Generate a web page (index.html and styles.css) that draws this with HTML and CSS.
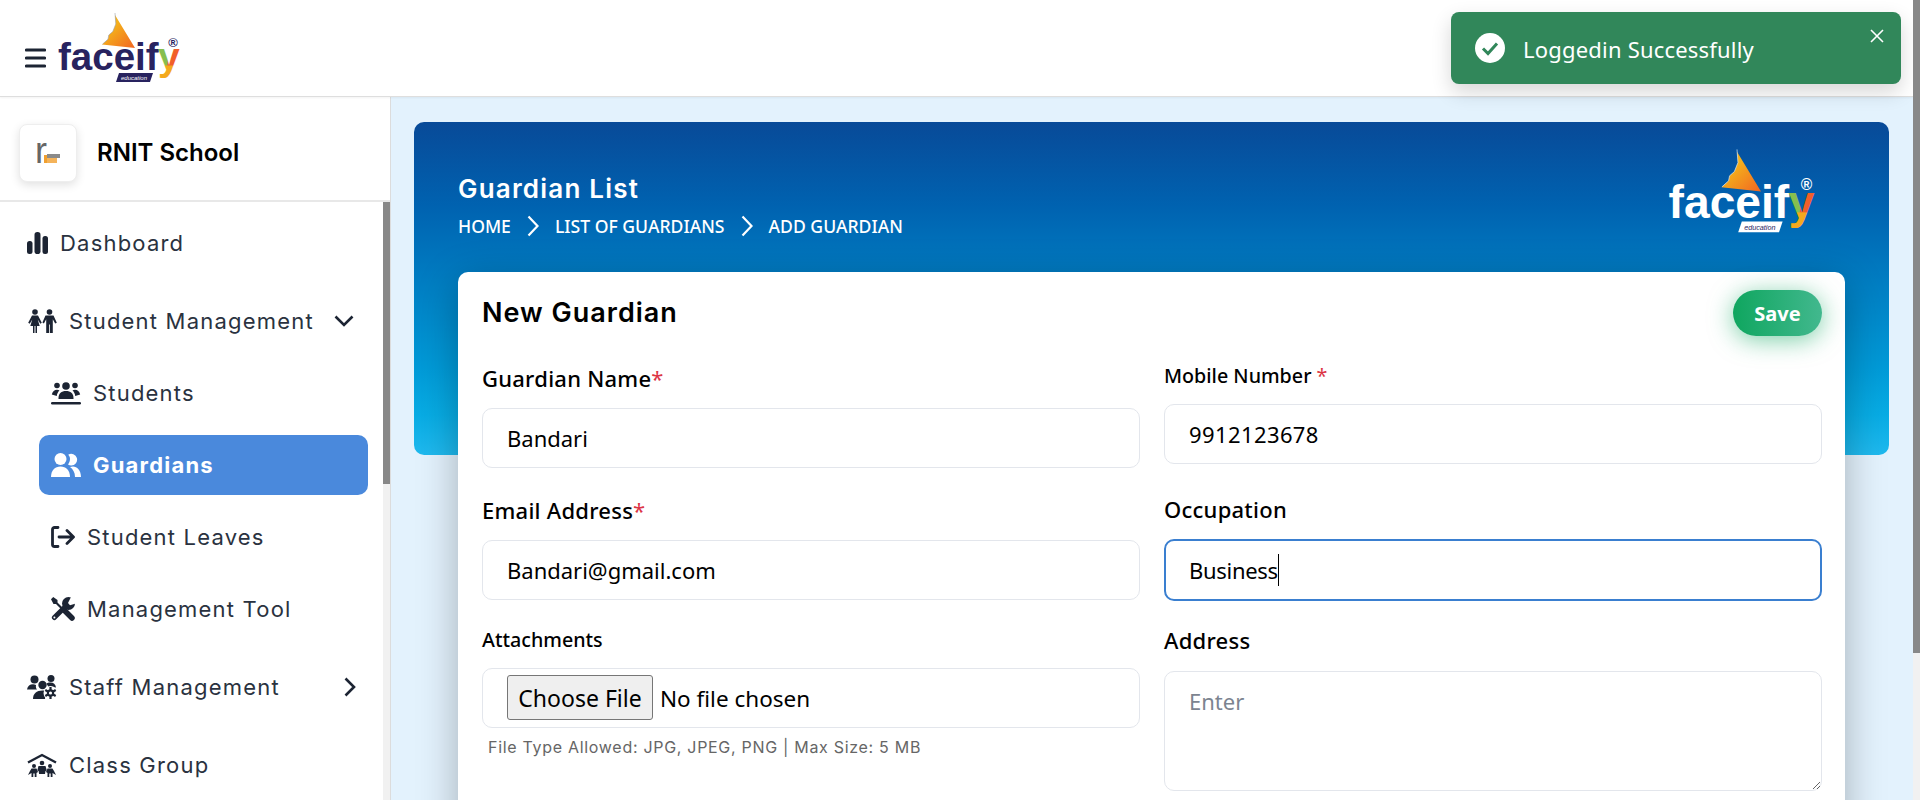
FILE: index.html
```html
<!DOCTYPE html>
<html lang="en">
<head>
<meta charset="utf-8">
<title>Guardian List</title>
<link rel="stylesheet" href="styles.css">
</head>
<body>
<svg class="defs" width="0" height="0" aria-hidden="true">
  <defs>
    <linearGradient id="kite" x1="0" y1="0" x2="1" y2="1">
      <stop offset="0.35" stop-color="#f4b01b"/>
      <stop offset="1" stop-color="#f26522"/>
    </linearGradient>
    <pattern id="wye" patternUnits="userSpaceOnUse" x="0" y="0" width="125" height="75">
      <rect width="125" height="75" fill="#86bf4f"/>
      <polygon points="115,30 125,30 125,75 110,75" fill="#f15f2a"/>
      <rect y="54.500" width="125" height="21" fill="#f4a91d"/>
    </pattern>
  </defs>
</svg>
<div class="app">
  <header class="topbar">
    <button class="burger" aria-label="Menu">
      <svg width="21" height="20" viewBox="0 0 21 20"><path d="M1.500 2h18M1.500 10h18M1.500 18h18"/></svg>
    </button>
    <svg class="logo logo-dark" width="125" height="75" viewBox="0 0 125 75">
      <path class="kite" d="M60 4l.8 9-3 7.500-4 3.500-.8 4.200L47 33.500l33 3.500z"/>
      <path class="kite-edge" d="M60 2l.8 11-3 7.500-4 3.500-.8 4.200-5.500 5"/>
      <text class="logo-word" x="3" y="59">faceif</text>
      <text class="logo-y" x="103" y="59">y</text>
      <text class="logo-reg" x="118" y="36">®</text>
      <path class="logo-tag-bg" d="M64 62h34l-3 9H61z"/>
      <text class="logo-tag" x="79" y="69">education</text>
    </svg>
    <div class="toast">
      <svg class="toast-check" width="30" height="30" viewBox="0 0 30 30"><circle cx="15" cy="15" r="15"/><path d="M8 15.500l5 5 9-10"/></svg>
      <span class="toast-text">Loggedin Successfully</span>
      <svg class="toast-close" width="14" height="14" viewBox="0 0 14 14"><path d="M1 1l12 12M13 1L1 13"/></svg>
    </div>
  </header>
  <div class="shell">
    <aside class="sidebar">
      <div class="school">
        <div class="school-logo">
          <svg width="26" height="46" viewBox="0 0 26 46">
            <text class="school-r" x="0" y="33">r</text>
            <rect x="9" y="25" width="3" height="8" fill="#f0a030"/>
            <rect x="12" y="24" width="13" height="4" fill="#8a8a8a"/>
            <rect x="12" y="28" width="10" height="5" fill="#f4b35a"/>
          </svg>
        </div>
        <span class="school-name">RNIT School</span>
      </div>
      <div class="side-body">
        <nav class="menu">
          <a class="item">
            <svg width="21" height="22" viewBox="0 0 21 22"><rect x="0" y="9" width="5.500" height="13" rx="2.500"/><rect x="7.500" y="0" width="6" height="22" rx="2.800"/><rect x="15.500" y="4" width="5.500" height="18" rx="2.500"/></svg>
            <span>Dashboard</span>
          </a>
          <div class="group">
            <a class="item">
              <svg width="30" height="24" viewBox="0 0 30 24"><circle cx="8" cy="3" r="2.800"/><path d="M5 6.500h6l3.800 7.300-1.500.9-2.600-4.200 2 6.500H10v7H8.500v-7h-1v7H6v-7H3.300l2-6.500-2.600 4.200-1.500-.9z"/><circle cx="22.500" cy="3" r="2.800"/><path d="M18.500 6.500h8l3.300 7.300-1.600.8-2.400-4.300V24h-2.900v-8.500h-.8V24h-2.900V10.300l-2.300 4.300-1.500-1z"/></svg>
              <span>Student Management</span>
              <svg class="chev chev-down" width="20" height="12" viewBox="0 0 20 12"><path d="M1.500 1.500l8.500 8.500 8.500-8.500"/></svg>
            </a>
            <div class="sub">
              <a class="item sub-item">
                <svg width="30" height="23" viewBox="0 0 30 23"><circle cx="15" cy="4" r="3.800"/><circle cx="6" cy="3.500" r="2.800"/><circle cx="24" cy="3.500" r="2.800"/><path d="M7.500 16c0-4.500 3-7 7.500-7s7.500 2.500 7.500 7v1h-15z"/><path d="M.8 12.500C1.500 9.500 3.500 7.800 6 7.800c1 0 1.800.2 2.500.6C7 9.800 6 11.500 5.800 14z"/><path d="M29.200 12.500c-.7-3-2.700-4.700-5.200-4.700-1 0-1.800.2-2.500.6 1.500 1.400 2.500 3.100 2.700 5.600z"/><rect y="20" width="30" height="2.500" rx="1.200"/></svg>
                <span>Students</span>
              </a>
              <a class="item sub-item active">
                <svg width="30" height="24" viewBox="0 0 30 24"><circle cx="9.500" cy="6" r="6"/><path d="M0 24c0-6.500 4-10.500 9.500-10.500S19 17.500 19 24z"/><path d="M17 11.500c1 .6 2 1 3.300 1a5.800 5.800 0 1 0-3.100-10.700C18.500 3 19 4.500 19 6c0 2-.8 4.200-2 5.500z"/><path d="M19 14c3 2.200 5 5.500 5 10h6c0-6.500-4-10.500-8-10.500-1 0-2 .2-3 .5z"/></svg>
                <span>Guardians</span>
              </a>
              <a class="item sub-item">
                <svg class="stroke-icon" width="24" height="22" viewBox="0 0 24 22"><path d="M7 1.500H3.500a2 2 0 0 0-2 2v15a2 2 0 0 0 2 2H7"/><path d="M8 11h14M16 4.500l6.500 6.500-6.500 6.500"/></svg>
                <span>Student Leaves</span>
              </a>
              <a class="item sub-item">
                <svg width="24" height="24" viewBox="0 0 24 24"><path d="M0 2.200L2.200 0l4.300 3v2.500l5.500 5.500-1.500 1.500-5.500-5.500H2.500z"/><path class="line thick" d="M13.500 13.500l7.500 7.500"/><path class="line mid" d="M3.400 20.600L13 11"/><circle cx="17.500" cy="6.500" r="6.500"/><polygon class="notch" points="17,6 20.500,-1 25,-1 25,5 24.500,6.500 19,8.200"/><circle class="notch" cx="3.400" cy="20.600" r="1"/></svg>
                <span>Management Tool</span>
              </a>
            </div>
          </div>
          <a class="item">
            <svg width="30" height="24" viewBox="0 0 30 24"><circle cx="7.500" cy="4.500" r="4"/><circle cx="24" cy="3.500" r="3.500"/><circle cx="15.500" cy="10" r="4.200"/><path d="M0 14.500C.5 11 3 9.300 6 9.300c1 0 2 .2 3 .7-.4 2 .2 3.500 1 4.500z"/><path d="M6 24c0-5.500 3.500-8.500 9.500-8.500 1.500 0 2.800.2 3.500.6L18 24z"/><path d="M19.500 9c.2-1 1.500-1.500 4-1.500 3 0 5 1.800 5.500 5h-7.500c-.6-1.500-1-2.500-2-3.500z"/><circle class="notch" cx="23.500" cy="18" r="7"/><circle cx="23.500" cy="18" r="3.700"/><path class="gear-teeth" d="M23.500 12v12M18.300 15l10.400 6M18.300 21l10.400-6"/><circle class="notch" cx="23.500" cy="18" r="1.600"/></svg>
            <span>Staff Management</span>
            <svg class="chev chev-right" width="12" height="20" viewBox="0 0 12 20"><path d="M1.500 1.500l8.500 8.500-8.500 8.500"/></svg>
          </a>
          <a class="item">
            <svg width="30" height="24" viewBox="0 0 30 24"><path class="roof" d="M1 9.500L15 2l14 7.500"/><circle cx="15" cy="10" r="2.300"/><circle cx="7" cy="13" r="2"/><circle cx="23" cy="13" r="2"/><path d="M11.500 13h7l1.300 4.500-1.300.5-.5 3h-5.900l-.5-3-1.300-.5z"/><path d="M4.500 15.500h5L11 19l-1.500 1V24h-1.800v-3.500h-1.400V24H4.500v-4L1 22l2-4z"/><path d="M20.500 15.500h5l1.500 2.500 2 4-3.500-2V24h-1.800v-3.500h-1.400V24H20.500v-4L19 19z"/></svg>
            <span>Class Group</span>
          </a>
        </nav>
        <div class="scrollbar side-scroll"><div class="thumb"></div></div>
      </div>
    </aside>
    <main class="content">
      <section class="hero">
        <div class="hero-head">
          <div>
            <h1 class="hero-title">Guardian List</h1>
            <div class="crumbs">
              <span>HOME</span>
              <svg width="12" height="22" viewBox="0 0 12 22"><path d="M1.500 1.500L10.500 11l-9 9.500"/></svg>
              <span>LIST OF GUARDIANS</span>
              <svg width="12" height="22" viewBox="0 0 12 22"><path d="M1.500 1.500L10.500 11l-9 9.500"/></svg>
              <span>ADD GUARDIAN</span>
            </div>
          </div>
          <svg class="logo logo-light" width="150" height="90" viewBox="0 0 125 75">
            <path class="kite" d="M60 4l.8 9-3 7.500-4 3.500-.8 4.200L47 33.500l33 3.500z"/>
            <path class="kite-edge" d="M60 2l.8 11-3 7.500-4 3.500-.8 4.200-5.500 5"/>
            <text class="logo-word" x="3" y="59">faceif</text>
            <text class="logo-y" x="103" y="59">y</text>
            <text class="logo-reg" x="118" y="36">®</text>
            <path class="logo-tag-bg" d="M64 62h34l-3 9H61z"/>
            <text class="logo-tag" x="79" y="69">education</text>
          </svg>
        </div>
        <div class="card">
          <div class="card-head">
            <h2 class="card-title">New Guardian</h2>
            <button class="save">Save</button>
          </div>
          <form class="form">
            <div class="col col-left">
              <div class="field">
                <label class="label">Guardian Name<em>*</em></label>
                <input class="input" type="text" value="Bandari">
              </div>
              <div class="field">
                <label class="label">Email Address<em>*</em></label>
                <input class="input" type="text" value="Bandari@gmail.com">
              </div>
              <div class="field">
                <label class="label label-sm">Attachments</label>
                <input class="input file" type="file">
                <p class="hint">File Type Allowed: JPG, JPEG, PNG | Max Size: 5 MB</p>
              </div>
            </div>
            <div class="col col-right">
              <div class="field">
                <label class="label label-sm">Mobile Number <em>*</em></label>
                <input class="input input-num" type="text" value="9912123678">
              </div>
              <div class="field field-occ">
                <label class="label">Occupation</label>
                <div class="focus-wrap">
                  <input class="input input-focus" type="text" value="Business">
                  <span class="caret"></span>
                </div>
              </div>
              <div class="field field-addr">
                <label class="label">Address</label>
                <textarea class="input area" placeholder="Enter"></textarea>
              </div>
            </div>
          </form>
        </div>
      </section>
    </main>
  </div>
</div>
<div class="scrollbar page-scroll"><div class="thumb"></div></div>
</body>
</html>
```
FILE: styles.css
```css
* { box-sizing: border-box; }
html, body { margin: 0; height: 800px; }
body {
  display: flex;
  overflow: hidden;
  background: #fff;
  font-family: "Noto Sans", sans-serif;
  color: #000;
}
.defs { position: absolute; }
.app { flex: 1; min-width: 0; display: flex; flex-direction: column; position: relative; height: 800px; overflow: hidden; }

.scrollbar { width: 7px; flex: none; background: #f1f1f1; }
.thumb { width: 100%; background: #888; }
.page-scroll .thumb { height: 653px; }
.side-scroll .thumb { height: 282px; }

/* top bar */
.topbar {
  height: 97px;
  flex: none;
  display: flex;
  align-items: center;
  padding-left: 25px;
  border-bottom: 1px solid #dedede;
  background: #fff;
  box-shadow: 0 1px 2px rgba(0,0,0,.05);
  position: relative;
  z-index: 3;
}
.burger { background: none; border: 0; padding: 0; margin: 20px 9px 0 0; display: flex; }
.burger svg path { stroke: #1c2433; stroke-width: 3.200; stroke-linecap: round; fill: none; }

.kite { fill: url(#kite); }
.kite-edge { fill: none; stroke-width: .6; }
.logo-word { font: 700 38.500px "Liberation Sans", sans-serif; }
.logo-y { font: 700 39px "Liberation Sans", sans-serif; fill: url(#wye); }
.logo-reg { font: 700 13px "Liberation Sans", sans-serif; text-anchor: middle; }
.logo-tag { font: italic 400 6px "Liberation Sans", sans-serif; text-anchor: middle; }
.logo-dark .logo-word, .logo-dark .logo-reg { fill: #28235f; }
.logo-dark .logo-tag-bg { fill: #28235f; }
.logo-dark .logo-tag { fill: #fff; }
.logo-dark .kite-edge { stroke: #9a9fa8; }
.logo-light .logo-word, .logo-light .logo-reg { fill: #fff; }
.logo-light .logo-tag-bg { fill: #fff; }
.logo-light .logo-tag { fill: #28235f; }
.logo-light .kite-edge { stroke: #cfe3f5; }

.toast {
  position: absolute;
  top: 12px;
  right: 12px;
  width: 450px;
  height: 72px;
  border-radius: 8px;
  background: #31875a;
  box-shadow: 0 8px 20px rgba(0,0,0,.16);
  display: flex;
  align-items: center;
  padding-left: 24px;
}
.toast-check circle { fill: #fff; }
.toast-check path { fill: none; stroke: #31875a; stroke-width: 3; }
.toast-text { margin: 2px 0 0 18px; color: #fff; font-size: 22px; letter-spacing: .2px; }
.toast-close { position: absolute; top: 17px; right: 17px; }
.toast-close path { stroke: #fff; stroke-width: 1.600; fill: none; }

/* shell */
.shell { flex: 1; min-height: 0; display: flex; }
.sidebar {
  width: 391px;
  flex: none;
  display: flex;
  flex-direction: column;
  background: #fff;
  border-right: 1px solid #dcdcdc;
}
.school {
  height: 105px;
  flex: none;
  display: flex;
  align-items: center;
  gap: 20px;
  padding: 9px 0 0 19px;
  border-bottom: 2px solid #e8e8e8;
}
.school-logo {
  width: 58px;
  height: 58px;
  border-radius: 8px;
  background: #fff;
  border: 1px solid #eee;
  box-shadow: 0 3px 10px rgba(0,0,0,.12);
  display: flex;
  align-items: center;
  justify-content: center;
}
.school-r { font: 400 36px "Liberation Sans", sans-serif; fill: #666; }
.school-name { margin-top: -2px; font: 600 24px Inter, sans-serif; color: #000; }

.side-body { flex: 1; min-height: 0; display: flex; }
.menu {
  flex: 1;
  padding: 11px 15px 0 12px;
  display: flex;
  flex-direction: column;
  gap: 18px;
}
.group { display: flex; flex-direction: column; gap: 12px; }
.sub { display: flex; flex-direction: column; gap: 12px; padding-left: 27px; }
.item {
  height: 60px;
  flex: none;
  display: flex;
  align-items: center;
  gap: 12px;
  padding-left: 15px;
  color: #2a3240;
  font: 400 22px Inter, sans-serif;
  letter-spacing: 1.200px;
}
.item svg { flex: none; fill: #1c2433; }
.sub-item { padding-left: 12px; border-radius: 10px; }
.active { background: #4a89dc; color: #fff; font-weight: 700; }
.active svg { fill: #fff; }
.stroke-icon path { fill: none; stroke: #1c2433; stroke-width: 2.800; stroke-linecap: round; stroke-linejoin: round; }
.line { fill: none; stroke: #1c2433; stroke-linecap: round; }
.thick { stroke-width: 5.500; }
.mid { stroke-width: 5; }
.item svg .notch { fill: #fff; }
.gear-teeth { fill: none; stroke: #1c2433; stroke-width: 2.200; }
.roof { fill: none; stroke: #1c2433; stroke-width: 2.400; }
.chev path { fill: none; stroke: #1c2433; stroke-width: 2.600; }
.item svg.chev { fill: none; margin-left: auto; }
.chev-down { margin-right: 14px; }
.chev-right { margin-right: 12px; }

/* main */
.content { flex: 1; min-width: 0; padding: 25px 24px 0 23px; background: #e3f2fd; }
.hero {
  height: 333px;
  padding: 0 44px;
  border-radius: 10px;
  background: linear-gradient(180deg, #084a98 0%, #0062b0 25%, #0080c4 50%, #0098d6 72%, #08ace4 88%, #1fb9ee 100%);
}
.hero-head {
  height: 150px;
  display: flex;
  justify-content: space-between;
  padding: 48px 30px 0 0;
  color: #fff;
  position: relative;
}
.hero-head .logo { margin-top: -23px; }
.hero-title { margin: 0; font: 600 26px/38px Inter, sans-serif; letter-spacing: 1.200px; }
.crumbs { margin-top: 5px; display: flex; align-items: center; gap: 16px; font-size: 17.600px; font-weight: 500; height: 26px; }
.crumbs svg path { fill: none; stroke: #fff; stroke-width: 2.200; }

.card {
  height: 600px;
  padding: 18px 23px 0 24px;
  background: #fff;
  border-radius: 10px;
  box-shadow: 0 10px 40px rgba(0,0,0,.28);
}
.card-head { height: 46px; display: flex; justify-content: space-between; align-items: center; }
.card-title { margin: 0; font: 600 27px/36px Inter, sans-serif; letter-spacing: 1px; color: #000; }
.save {
  width: 89px;
  height: 46px;
  border: 0;
  border-radius: 23px;
  color: #fff;
  font: 700 20px "Noto Sans", sans-serif;
  background: linear-gradient(90deg, #0fa65f, #42b88e);
  box-shadow: 0 4px 24px rgba(15,166,95,.55);
}
.form { margin-top: 28px; display: grid; grid-template-columns: 1fr 1fr; column-gap: 24px; }
.col { display: flex; flex-direction: column; min-width: 0; }
.field + .field { margin-top: 28px; }
.col-right .field-occ { margin-top: 31px; }
.col-right .field-addr { margin-top: 25px; }
.label { display: block; height: 32px; margin-bottom: 12px; font-size: 22px; line-height: 29px; letter-spacing: .25px; font-weight: 500; color: #000; }
.col-right .field-addr .label { margin-bottom: 13px; }
.label-sm { height: 28px; line-height: 24px; font-size: 19.700px; letter-spacing: 0; }
.label em { font-style: normal; font-weight: 400; color: #dc3545; }
.input {
  display: block;
  width: 100%;
  height: 60px;
  padding: 0 24px;
  border: 1px solid #e3e6ec;
  border-radius: 10px;
  background: #fff;
  font: 400 22px "Noto Sans", sans-serif;
  color: #000;
  outline: 0;
}
.input-num { letter-spacing: .4px; }
.focus-wrap { position: relative; }
.input-focus { height: 62px; border: 2px solid #3a7fd0; padding-left: 23px; letter-spacing: -.3px; }
.caret { position: absolute; left: 114px; top: 15px; width: 1px; height: 32px; background: #000; }
.file { padding: 6px 24px 0; font-size: 22.500px; }
.file::file-selector-button {
  width: 146px;
  height: 45px;
  margin-right: 7px;
  border: 1px solid #767676;
  border-radius: 3px;
  background: #efefef;
  font: 400 23px "Noto Sans", sans-serif;
  color: #000;
}
.hint { margin: 9px 0 0 6px; font: 400 16px/20px Inter, sans-serif; letter-spacing: .7px; color: #666; }
.area { height: 120px; padding: 11px 24px; line-height: 36px; resize: vertical; }
.area::placeholder { color: #7c8490; opacity: 1; }
```
